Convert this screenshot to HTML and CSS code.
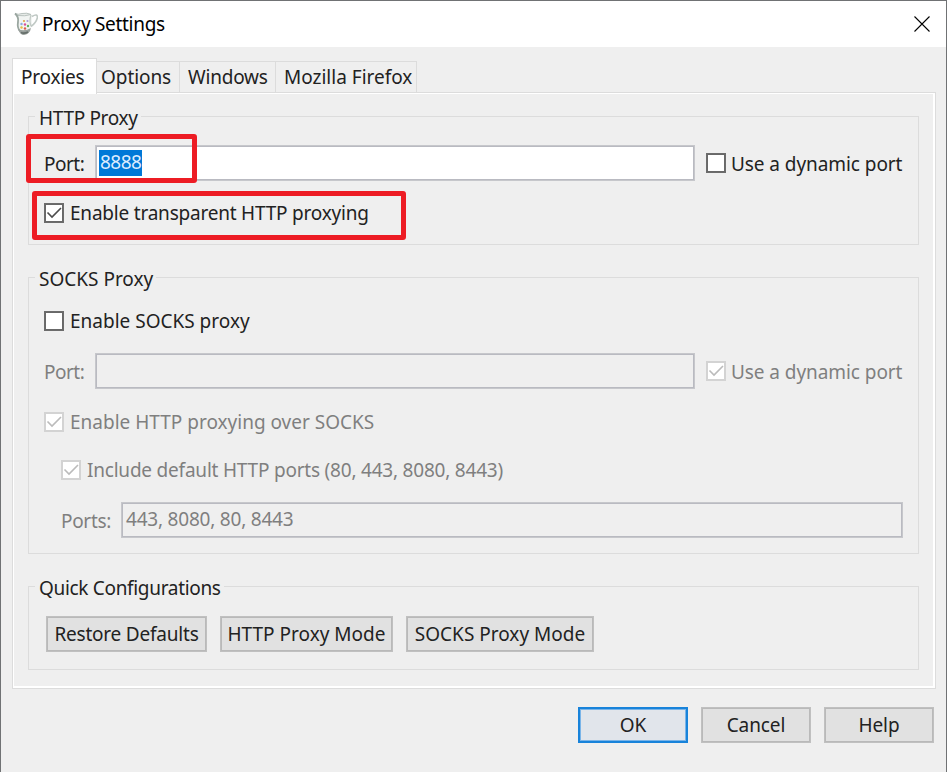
FILE: index.html
```html
<!DOCTYPE html>
<html lang="en">
<head>
<meta charset="utf-8">
<title>Proxy Settings</title>
<link rel="stylesheet" href="styles.css">
</head>
<body>
<div class="window">
  <header class="titlebar">
    <svg class="app-icon" width="24" height="24" viewBox="0 0 24 24">
      <path d="M1 1.5 Q4 3 8 1.5 Q13 0 17 2 L18 4 L18 14 L14 19 H6 Q3 15 5 8 Z" fill="#f1f4f2"/>
      <path d="M1 1.5 Q4 3 8 1.5 Q13 .5 17 2.5 Q11 4.500 4 3.5 Z" fill="#e6ebe8" stroke="#b9c2be" stroke-width="1"/>
      <path d="M1 1.500 Q5 5 4 10 Q3 16 6 19" fill="none" stroke="#9aa6a0" stroke-width="1.800"/>
      <path d="M17 3 Q15 9 17 14" fill="none" stroke="#c3cbc7" stroke-width="1.300"/>
      <path d="M18 4.500 Q24 1 23.300 6 Q22 11 17 14.500" fill="none" stroke="#c0c9c5" stroke-width="1.600"/>
      <path d="M4 17 Q10 20 17 16 Q16 22 10 23 Q6 23 4 17Z" fill="#9aa19d"/>
      <path d="M7 20.500 Q10 22 14 20" stroke="#656e6a" stroke-width="1.800" fill="none"/>
      <circle cx="10" cy="9" r="1.100" fill="#e3a342"/><circle cx="13.500" cy="9" r="1.100" fill="#a79cd6"/>
      <circle cx="7.500" cy="12" r="1.200" fill="#8dabe0"/><circle cx="11" cy="12.500" r="1.200" fill="#d84e9a"/>
      <circle cx="14" cy="14" r="1.200" fill="#5eb45e"/><circle cx="7.500" cy="15.500" r="1.200" fill="#e4bd42"/>
      <circle cx="11" cy="16.500" r="1.200" fill="#dd5b4a"/>
    </svg>
    <h1 class="t title-text">Proxy Settings</h1>
    <svg class="close" width="16" height="16" viewBox="0 0 16 16"><path d="M.5 .5 L15.500 15.500 M15.500 .5 L.5 15.500" stroke="#000" stroke-width="1.100"/></svg>
  </header>
  <nav class="tabs">
    <div class="tab active"><span class="t s2">Proxies</span></div>
    <div class="tab tab-options"><span class="t s1">Options</span></div>
    <div class="tab tab-windows"><span class="t s2">Windows</span></div>
    <div class="tab tab-firefox"><span class="t">Mozilla Firefox</span></div>
  </nav>
  <main class="panel">
    <section class="group group-http">
      <h2 class="legend"><span class="t s3">HTTP Proxy</span></h2>
      <div class="row port-row">
        <span class="t port s5">Port:</span>
        <div class="input"><span class="t selected s5">8888</span></div>
        <span class="check"></span><span class="t s1">Use a dynamic port</span>
      </div>
      <div class="row transparent-row">
        <span class="check"><svg viewBox="0 0 20 20"><path d="M3.500 9.500 L8 14 L17 5"/></svg></span><span class="t s2">Enable transparent HTTP proxying</span>
      </div>
      <div class="mark mark-port"></div>
      <div class="mark mark-transparent"></div>
    </section>
    <section class="group group-socks">
      <h2 class="legend"><span class="t">SOCKS Proxy</span></h2>
      <div class="row enable-row"><span class="check"></span><span class="t">Enable SOCKS proxy</span></div>
      <div class="row port-row disabled">
        <span class="t port s5">Port:</span>
        <div class="input"></div>
        <span class="check"><svg viewBox="0 0 20 20"><path d="M3.500 9.500 L8 14 L17 5"/></svg></span><span class="t s1">Use a dynamic port</span>
      </div>
      <div class="row over-row disabled"><span class="check"><svg viewBox="0 0 20 20"><path d="M3.500 9.500 L8 14 L17 5"/></svg></span><span class="t">Enable HTTP proxying over SOCKS</span></div>
      <div class="row include-row disabled"><span class="check"><svg viewBox="0 0 20 20"><path d="M3.500 9.500 L8 14 L17 5"/></svg></span><span class="t s2">Include default HTTP ports (80, 443, 8080, 8443)</span></div>
      <div class="row ports-row disabled">
        <span class="t ports s3">Ports:</span>
        <div class="input"><span class="t s2">443, 8080, 80, 8443</span></div>
      </div>
    </section>
    <section class="group group-quick">
      <h2 class="legend"><span class="t s3">Quick Configurations</span></h2>
      <div class="row quick-row">
        <button class="btn restore"><span class="t s2">Restore Defaults</span></button>
        <button class="btn http-mode"><span class="t">HTTP Proxy Mode</span></button>
        <button class="btn socks-mode"><span class="t">SOCKS Proxy Mode</span></button>
      </div>
    </section>
  </main>
  <footer class="actions">
    <button class="btn primary"><span class="t">OK</span></button>
    <button class="btn"><span class="t s1">Cancel</span></button>
    <button class="btn"><span class="t s1">Help</span></button>
  </footer>
</div>
</body>
</html>
```

FILE: styles.css
```css
* { box-sizing: border-box; }
body {
  margin: 0;
  font: 19px/26px "Noto Sans", "Open Sans", sans-serif;
  color: #222;
  background: #efefef;
}
h1, h2 { margin: 0; font: inherit; }
.t { white-space: nowrap; }
.s1 { letter-spacing: -0.07px; }
.s2 { letter-spacing: -0.21px; }
.s3 { letter-spacing: -0.32px; }
.s5 { letter-spacing: -0.5px; }
.window {
  width: 947px;
  height: 772px;
  border: 1px solid #707274;
  border-bottom: 0;
  background: #efefef;
  overflow: hidden;
}
.titlebar {
  height: 46px;
  padding: 0 16px 0 13px;
  display: flex;
  align-items: center;
  background: #fff;
  color: #000;
}
.title-text { margin: -1px 0 0 4px; letter-spacing: -0.3px; }
.close { margin-left: auto; }
.tabs {
  display: flex;
  align-items: flex-end;
  height: 45px;
  margin-left: 11px;
}
.tab {
  height: 31px;
  border: 1px solid #dcdcdc;
  border-width: 1px 1px 0 0;
  line-height: 30px;
}
.tab.active {
  height: 36px;
  width: 85px;
  margin-bottom: -2px;
  padding-left: 8px;
  border-left-width: 1px;
  background: #fff;
  line-height: 36px;
  z-index: 1;
}
.tab-options { width: 83px; padding-left: 4px; }
.tab-windows { width: 96px; padding-left: 8px; }
.tab-firefox { width: 141px; padding-left: 8px; }
.panel {
  width: 924px;
  height: 597px;
  margin-left: 11px;
  padding: 23px 0 0 15px;
  border: 1px solid #dcdcdc;
  box-shadow: inset 1px 1px #fff, inset -2px -2px #fff;
}
.group {
  position: relative;
  width: 891px;
  border: 1px solid #dcdcdc;
}
.group-http { height: 129px; }
.group-socks { height: 277px; margin-top: 32px; }
.group-quick { height: 84px; margin-top: 32px; }
.legend {
  display: block;
  width: fit-content;
  height: 26px;
  margin: -12px 0 0 6px;
  padding: 0 3px 0 4px;
  background: #efefef;
}
.row { display: flex; align-items: center; }
.port-row { height: 36px; margin-left: 15px; }
.group-http .port-row { margin-top: 14px; }
.port { width: 51px; }
.input {
  display: flex;
  width: 600px;
  height: 36px;
  padding: 4px 4px 0;
  border: 1px solid #c6c7cb;
  box-shadow: inset 0 0 0 1px #b9bac1;
  background: #fff;
}
.disabled { color: #7f7f7f; }
.disabled .input { background: #efefef; }
.selected { height: 26px; margin-left: -1px; padding: 0 1px; background: #0078d7; color: #dcecff; line-height: 24px; }
.check {
  flex: none;
  width: 20px;
  height: 20px;
  margin-right: 6px;
  border: 1px solid #6c6c6c;
  box-shadow: inset 0 0 0 1px #686868;
  background: #fff;
}
.input + .check { margin-left: 11px; margin-right: 5px; }
.check svg { display: block; width: 20px; height: 20px; margin: -1px; fill: none; stroke: #4c4c4c; stroke-width: 1.600; }
.disabled .check { border-color: #d3d3d3; box-shadow: inset 0 0 0 1px #d3d3d3; }
.disabled .check svg { stroke: #bbb; }
.transparent-row { height: 26px; margin: 19px 0 0 15px; }
.enable-row { height: 26px; margin: 16px 0 0 15px; }
.group-socks .port-row { margin-top: 19px; }
.over-row { height: 26px; margin: 20px 0 0 15px; }
.include-row { height: 26px; margin: 22px 0 0 32px; }
.ports-row { height: 36px; margin: 19px 0 0 32px; }
.ports { width: 60px; }
.port-row .port, .ports { padding-top: 1px; }
.port-row .check + .t { padding-top: 1px; }
.ports-row .input { width: 782px; line-height: 25px; }
.quick-row { margin: 15px 0 0 17px; gap: 13px; }
.btn {
  width: 110px;
  height: 36px;
  padding: 0;
  border: 1px solid #c0c0c0;
  box-shadow: inset 0 0 0 1px #b9b9b9;
  background: #e1e1e1;
  color: #222;
  font: inherit;
}
.restore { width: 161px; }
.http-mode { width: 173px; }
.socks-mode { width: 188px; }
.actions { display: flex; justify-content: flex-end; gap: 13px; margin: 18px 12px 0 0; }
.primary { border: 2px solid #1883da; background: #e1e5eb; box-shadow: inset 0 0 0 1px #79b4e8; }
.mark { position: absolute; border: 5px solid #ed1c24; border-radius: 3px; }
.mark-port { left: -3px; top: 17px; width: 171px; height: 49px; }
.mark-transparent { left: 3px; top: 74px; width: 374px; height: 49px; }
```
